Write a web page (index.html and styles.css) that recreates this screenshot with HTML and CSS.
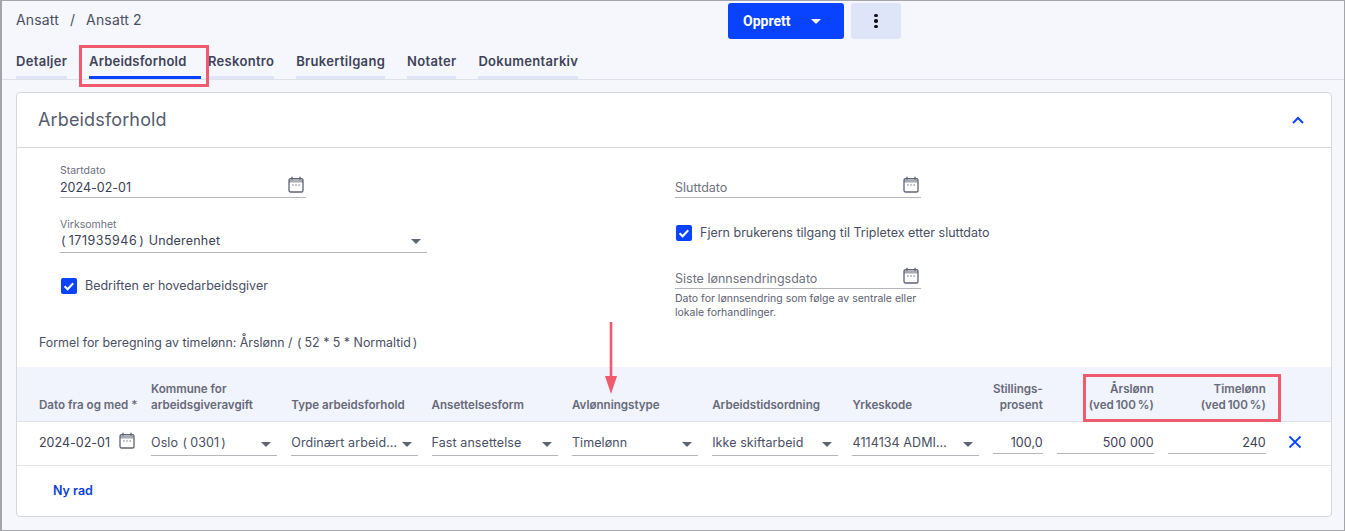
FILE: index.html
```html
<!DOCTYPE html>
<html lang="no">
<head>
<meta charset="utf-8">
<title>Ansatt 2 – Arbeidsforhold</title>
<link rel="stylesheet" href="styles.css">
</head>
<body>
<svg class="sprites" width="0" height="0" aria-hidden="true">
  <symbol id="cal" viewBox="0 0 16 17">
    <path d="M1 4.2a1.6 1.6 0 0 1 1.6-1.6h10.8A1.6 1.6 0 0 1 15 4.2v10.2a1.6 1.6 0 0 1-1.6 1.6H2.6A1.6 1.6 0 0 1 1 14.4z" fill="none" stroke="currentColor" stroke-width="1.3"/>
    <path d="M1 3.5h14v3H1z" fill="currentColor" opacity=".55"/>
    <path d="M4 .8v3M12 .8v3" stroke="currentColor" stroke-width="1.4" fill="none"/>
    <path d="M4.2 9h1.4M7.3 9h1.4M10.4 9h1.4" stroke="currentColor" stroke-width="1.2" fill="none"/>
  </symbol>
  <symbol id="tick" viewBox="0 0 16 16">
    <path d="M3.6 8.3l3 2.9 5.6-6" fill="none" stroke="#fff" stroke-width="2"/>
  </symbol>
</svg>
<div class="page">
  <header class="top">
    <div class="crumbs-row">
      <nav class="crumbs"><span>Ansatt</span><span class="sep">/</span><span>Ansatt 2</span></nav>
      <div class="actions">
        <button class="btn-primary" type="button">Opprett<span class="caret caret-white"></span></button>
        <button class="btn-more" type="button" aria-label="Mer"><i></i><i></i><i></i></button>
      </div>
    </div>
    <nav class="tabs">
      <a class="tab tab-detaljer">Detaljer</a>
      <a class="tab tab-active">Arbeidsforhold</a>
      <a class="tab">Reskontro</a>
      <a class="tab">Brukertilgang</a>
      <a class="tab">Notater</a>
      <a class="tab">Dokumentarkiv</a>
    </nav>
  </header>

  <section class="card">
    <div class="card-head">
      <h2>Arbeidsforhold</h2>
      <svg class="chev" width="14" height="9" viewBox="0 0 14 9"><path d="M2 7l5-5 5 5" fill="none" stroke="#0a43ff" stroke-width="2"/></svg>
    </div>

    <div class="form">
      <div class="form-col">
        <div class="field field-date">
          <label>Startdato</label>
          <div class="value">2024-02-01<svg class="cal"><use href="#cal"/></svg></div>
        </div>
        <div class="field field-select">
          <label>Virksomhet</label>
          <div class="value"><span><span class="po">(</span><span class="digits">171935946</span><span class="pc">)</span> Underenhet</span><span class="caret"></span></div>
        </div>
        <div class="check check-left"><span class="box"><svg width="16" height="16"><use href="#tick"/></svg></span>Bedriften er hovedarbeidsgiver</div>
      </div>
      <div class="form-col form-col-right">
        <div class="field field-date field-empty">
          <div class="value placeholder">Sluttdato<svg class="cal"><use href="#cal"/></svg></div>
        </div>
        <div class="check check-right"><span class="box"><svg width="16" height="16"><use href="#tick"/></svg></span>Fjern brukerens tilgang til Tripletex etter sluttdato</div>
        <div class="field field-date field-empty field-last">
          <div class="value placeholder">Siste lønnsendringsdato<svg class="cal"><use href="#cal"/></svg></div>
          <p class="help">Dato for lønnsendring som følge av sentrale eller lokale forhandlinger.</p>
        </div>
      </div>
    </div>

    <p class="formula">Formel for beregning av timelønn: Årslønn / <span class="po">(</span>52 * 5 * Normaltid<span class="pc">)</span></p>

    <div class="grid grid-head">
      <div>Dato fra og med *</div>
      <div>Kommune for arbeidsgiveravgift</div>
      <div>Type arbeidsforhold</div>
      <div>Ansettelsesform</div>
      <div>Avlønningstype</div>
      <div>Arbeidstidsordning</div>
      <div>Yrkeskode</div>
      <div class="right">Stillings-<br>prosent</div>
      <div class="right">Årslønn<br>(ved 100 %)</div>
      <div class="right">Timelønn<br>(ved 100 %)</div>
      <div></div>
    </div>
    <div class="grid grid-row">
      <div class="cell-date">2024-02-01<svg class="cal"><use href="#cal"/></svg></div>
      <div class="sel"><span>Oslo <span class="po">(</span>0301<span class="pc">)</span></span><span class="caret"></span></div>
      <div class="sel"><span>Ordinært arbeid…</span><span class="caret"></span></div>
      <div class="sel"><span>Fast ansettelse</span><span class="caret"></span></div>
      <div class="sel"><span>Timelønn</span><span class="caret"></span></div>
      <div class="sel"><span>Ikke skiftarbeid</span><span class="caret"></span></div>
      <div class="sel"><span>4114134 ADMI…</span><span class="caret"></span></div>
      <div class="num">100,0</div>
      <div class="num">500 000</div>
      <div class="num">240</div>
      <svg class="close" width="14" height="14" viewBox="0 0 14 14"><path d="M1.5 1.5l11 11M12.5 1.5l-11 11" stroke="#0a43ff" stroke-width="1.8" fill="none"/></svg>
    </div>
    <div class="card-foot"><a class="add">Ny rad</a></div>
  </section>

  <div class="mark mark-tab"></div>
  <div class="mark mark-salary"></div>
  <svg class="arrow" width="14" height="72" viewBox="0 0 14 72"><path d="M7 0v55" stroke="#ef5a6c" stroke-width="2.6"/><path d="M1 54h12l-6 18z" fill="#ef5a6c"/></svg>
</div>
</body>
</html>
```
FILE: styles.css
```css
* { box-sizing: border-box; }
html, body { margin: 0; height: 100%; }
body { font-family: Inter, "Noto Sans", sans-serif; font-feature-settings: "calt" 0; color: #3b4054; background: #f6f7fc; overflow: hidden; }
.sprites { position: absolute; }
.page { position: relative; width: 1345px; height: 531px; border: 1px solid #a3a5ab; border-left-width: 2px; padding: 0 12px 0 14px; overflow: hidden; }

.po { margin: 0 3px 0 1px; }
.pc { margin: 0 1px 0 2px; }
.digits { letter-spacing: .5px; }

.top { margin: 0 -12px 0 -14px; padding: 0 0 0 14px; height: 79px; border-bottom: 1px solid #dfe1e8; }
.crumbs-row { display: flex; height: 42px; }
.crumbs { width: 712px; padding-top: 11px; font-size: 14px; letter-spacing: .15px; line-height: 16px; color: #4a4f62; display: flex; }
.sep { margin: 0 11px; }
.actions { display: flex; gap: 7px; padding-top: 2px; height: 38px; }
.btn-primary { width: 116px; height: 36px; background: #0a43ff; color: #fff; border: 0; border-radius: 3px; font: 700 14px Roboto, sans-serif; display: flex; align-items: center; padding: 0 0 0 15px; }
.btn-primary .caret { margin-left: 21px; }
.btn-more { width: 50px; height: 36px; background: #dfe5f9; border: 0; border-radius: 3px; display: flex; flex-direction: column; align-items: center; justify-content: center; gap: 2px; padding: 0; }
.btn-more i { width: 3.6px; height: 3.6px; background: #111; border-radius: 50%; }

.caret { display: inline-block; width: 0; height: 0; border-left: 5px solid transparent; border-right: 5px solid transparent; border-top: 5px solid #5f6473; }
.caret-white { border-top-color: #fff; }

.tabs { display: flex; gap: 22px; height: 36px; }
.tab { height: 36px; padding-top: 10px; font-size: 13px; letter-spacing: .3px; line-height: 16px; font-weight: 600; color: #3f4459; border-bottom: 3px solid #dfe5f9; white-space: nowrap; }
.tab-detaljer { width: 51px; }
.tab-active { width: 112px; margin-right: -15px; border-bottom-color: #0a43ff; letter-spacing: .2px; }

.card { margin-top: 12px; height: 425px; background: #fff; border: 1px solid #d6d8de; border-radius: 4px; }
.card-head { height: 55px; border-bottom: 1px solid #d6d8de; display: flex; align-items: center; justify-content: space-between; padding: 0 26px 2px 21px; }
.card-head h2 { margin: 0; font-size: 18px; font-weight: 400; color: #565b6e; letter-spacing: .15px; }
.chev { margin-top: 2px; }

.form { display: grid; grid-template-columns: 615px 1fr; padding: 16px 0 0 43px; height: 187px; }
.field { position: relative; }
.field label { display: block; font-size: 10.5px; line-height: 14px; color: #6d7180; }
.value { display: flex; justify-content: space-between; align-items: center; font-size: 12.5px; line-height: 18px; height: 20px; border-bottom: 1px solid #b4b6bb; color: #3b4054; }
.field-date { width: 246px; }
.field-select { width: 367px; margin-top: 20px; }
.field-select .value { height: 21px; padding: 0 6px 2px 0; letter-spacing: .2px; }
.placeholder { color: #6d7180; }
.field-empty { padding-top: 14px; }
.check { display: flex; align-items: center; font-size: 12.5px; line-height: 16px; color: #4a4f62; }
.box { width: 16px; height: 16px; background: #0a43ff; border-radius: 2px; margin: 0 8px 0 1px; display: block; }
.box svg { display: block; }
.check-left { margin-top: 25px; }
.check-right { margin-top: 27px; }
.field-last { margin-top: 14px; }
.help { margin: 3px 0 0; font-size: 10.5px; line-height: 14px; color: #5d6170; width: 250px; }
.cal { width: 16px; height: 17px; color: #5f6473; margin-right: 2px; margin-top: -6px; flex: none; }

.formula { margin: 0; padding-left: 22px; height: 32px; font-size: 12.4px; line-height: 16px; color: #4a4f62; }

.grid { display: grid; grid-template-columns: 98px repeat(6, 126.3px) 50px 97px 98px 22px; column-gap: 14px; padding-left: 22px; }
.grid-head { height: 55px; background: #f1f3fd; border-bottom: 1px solid #dfe1e8; align-items: end; padding-bottom: 8px; font-size: 11.6px; line-height: 16px; font-weight: 600; color: #666a78; }
.grid-head > div:first-child { white-space: nowrap; }
.right { text-align: right; word-spacing: -1px; }
.grid-row { height: 44px; border-bottom: 1px solid #e3e4ea; align-items: start; padding-top: 11px; font-size: 12.5px; letter-spacing: .08px; }
.cell-date { display: flex; align-items: center; justify-content: space-between; height: 18px; white-space: nowrap; color: #3b4054; letter-spacing: 0; }
.cell-date .cal { margin: -4px 2px 0 0; }
.sel { display: flex; justify-content: space-between; align-items: center; height: 23px; padding: 0 6px 3px 0; border-bottom: 1px solid #b4b6bb; color: #4a5064; white-space: nowrap; }
.sel .caret { margin-top: 3px; }
.num { text-align: right; height: 21px; line-height: 20px; border-bottom: 1px solid #b4b6bb; color: #3b4054; }
.close { margin: 2px 0 0 8px; }
.card-foot { padding: 13px 0 0 36px; }
.add { font-size: 12.5px; line-height: 18px; font-weight: 600; color: #0b3fd8; }

.mark { position: absolute; border: 3px solid #ef5a6c; pointer-events: none; }
.mark-tab { left: 77px; top: 44px; width: 130px; height: 42px; }
.mark-salary { left: 1081px; top: 373px; width: 198px; height: 48px; }
.arrow { position: absolute; left: 602px; top: 321px; }
```
